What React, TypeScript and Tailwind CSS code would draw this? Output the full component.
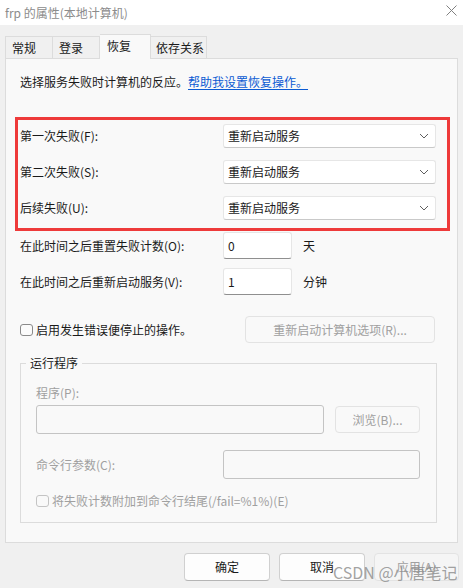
import React from "react";

const font = { fontFamily: '"Noto Sans CJK SC", "Microsoft YaHei", sans-serif' };

function Chevron() {
  return (
    <svg width="10" height="6" viewBox="0 0 10 6" className="shrink-0">
      <path d="M1 1 L5 5 L9 1" fill="none" stroke="#5f5f5f" strokeWidth="1" />
    </svg>
  );
}

function Select() {
  return (
    <div className="flex h-[24px] w-[213px] items-center justify-between rounded-[3px] border border-[#e6e6e6] border-b-[#c9c9c9] bg-white pl-[4px] pr-[6px]">
      <span>重新启动服务</span>
      <Chevron />
    </div>
  );
}

function Box() {
  return <div className="h-[12px] w-[13px] shrink-0 rounded-[3px] border border-[#8a8a8a] bg-[#fbfbfb]" />;
}

export default function App() {
  return (
    <div className="relative h-[588px] w-[463px] overflow-hidden bg-[#f0f0f0] text-[12px] leading-[16px] text-[#1a1a1a]" style={font}>
      {/* title bar */}
      <div className="flex h-[25px] items-center justify-between bg-white pl-[5px] pr-[6px]">
        <span className="text-[#8c8c8c]">frp 的属性(本地计算机)</span>
        <svg width="11" height="11" viewBox="0 0 11 11" className="mb-[4px]">
          <path d="M0.5 0.5 L10.5 10.5 M10.5 0.5 L0.5 10.5" stroke="#808080" strokeWidth="1" />
        </svg>
      </div>

      {/* tabs */}
      <div className="flex h-[33px] items-end pl-[5px]">
        <div className="flex h-[22px] w-[48px] items-center border border-b-0 border-[#dcdcdc] bg-[#f0f0f0] pl-[6px]">常规</div>
        <div className="flex h-[22px] w-[47px] items-center border border-b-0 border-l-0 border-[#dcdcdc] bg-[#f0f0f0] pl-[6px]">登录</div>
        <div className="relative z-10 mb-[-1px] flex h-[25px] w-[51px] items-start border border-b-0 border-l-0 border-[#dcdcdc] bg-[#f9f9f9] pl-[7px] pt-[3px]">恢复</div>
        <div className="flex h-[22px] w-[56px] items-center border border-b-0 border-l-0 border-[#dcdcdc] bg-[#f0f0f0] pl-[5px]">依存关系</div>
      </div>

      {/* panel */}
      <div className="mx-[5px] flex h-[485px] flex-col border border-[#dcdcdc] bg-[#f9f9f9] pl-[9px] pr-[6px]">
        <div className="mt-[15px] pl-[5px]">
          选择服务失败时计算机的反应。<span className="text-[#0b5bd3] underline underline-offset-2">帮助我设置恢复操作。</span>
        </div>

        <div className="mt-[27px] flex h-[114px] w-[435px] flex-col gap-[12px] border-[3px] border-[#ee3a3a] pl-[2px] pt-[4px]">
          <div className="flex items-center justify-between pr-[11px]">
            <span>第一次失败(F):</span>
            <Select />
          </div>
          <div className="flex items-center justify-between pr-[11px]">
            <span>第二次失败(S):</span>
            <Select />
          </div>
          <div className="flex items-center justify-between pr-[11px]">
            <span>后续失败(U):</span>
            <Select />
          </div>
        </div>

        <div className="mt-[1px] flex h-[27px] items-center pl-[5px]">
          <span className="w-[203px]">在此时间之后重置失败计数(O):</span>
          <div className="flex h-[27px] w-[69px] items-center rounded-[3px] border border-[#e6e6e6] border-b-[#8f8f8f] bg-white pl-[4px]">0</div>
          <span className="ml-[11px]">天</span>
        </div>
        <div className="mt-[9px] flex h-[27px] items-center pl-[5px]">
          <span className="w-[203px]">在此时间之后重新启动服务(V):</span>
          <div className="flex h-[27px] w-[69px] items-center rounded-[3px] border border-[#e6e6e6] border-b-[#8f8f8f] bg-white pl-[4px]">1</div>
          <span className="ml-[11px]">分钟</span>
        </div>

        <div className="mt-[21px] flex h-[27px] items-center justify-between pl-[5px] pr-[16px]">
          <div className="flex items-center gap-[3px]">
            <Box />
            <span>启用发生错误便停止的操作。</span>
          </div>
          <div className="flex h-[27px] w-[190px] items-center justify-center rounded-[4px] border border-[#e3e3e3] bg-[#f9f9f9] text-[#a0a0a0]">
            重新启动计算机选项(R)...
          </div>
        </div>

        {/* group box */}
        <div className="relative ml-[5px] mt-[20px] flex h-[160px] w-[417px] flex-col border border-[#dcdcdc] pl-[15px]">
          <span className="absolute left-[5px] top-[-9px] bg-[#f9f9f9] px-[4px] text-[#1a1a1a]">运行程序</span>
          <div className="mt-[21px] text-[#a0a0a0]">程序(P):</div>
          <div className="mt-[4px] flex items-center">
            <div className="h-[29px] w-[288px] rounded-[3px] border border-[#c4c4c4] bg-[#f9f9f9]" />
            <div className="ml-[11px] flex h-[27px] w-[85px] items-center justify-center rounded-[4px] border border-[#e3e3e3] bg-[#f9f9f9] text-[#a0a0a0]">
              浏览(B)...
            </div>
          </div>
          <div className="mt-[16px] flex h-[29px] items-center">
            <span className="w-[187px] text-[#a0a0a0]">命令行参数(C):</span>
            <div className="h-[29px] w-[197px] rounded-[3px] border border-[#c4c4c4] bg-[#f9f9f9]" />
          </div>
          <div className="mt-[14px] flex items-center gap-[3px]">
            <div className="h-[12px] w-[13px] shrink-0 rounded-[3px] border border-[#c4c4c4] bg-[#f9f9f9]" />
            <span className="text-[#a0a0a0]">将失败计数附加到命令行结尾(/fail=%1%)(E)</span>
          </div>
        </div>
      </div>

      {/* bottom buttons */}
      <div className="mt-[10px] flex justify-end gap-[9px] pr-[4px]">
        <div className="flex h-[28px] w-[86px] items-center justify-center rounded-[4px] border border-[#d0d0d0] border-b-[#b5b5b5] bg-[#fdfdfd]">确定</div>
        <div className="flex h-[28px] w-[86px] items-center justify-center rounded-[4px] border border-[#d0d0d0] border-b-[#b5b5b5] bg-[#fdfdfd]">取消</div>
        <div className="flex h-[28px] w-[85px] items-center justify-center rounded-[4px] border border-[#e3e3e3] bg-[#f5f5f5] text-[#a0a0a0]">应用(A)</div>
      </div>

      {/* watermark */}
      <div className="pointer-events-none absolute left-[333px] top-[562px] text-[16px] leading-[20px] text-[#8a8a8a]/80" style={{ fontFamily: '"Noto Sans CJK SC", sans-serif' }}>
        CSDN @小唐笔记
      </div>
    </div>
  );
}
